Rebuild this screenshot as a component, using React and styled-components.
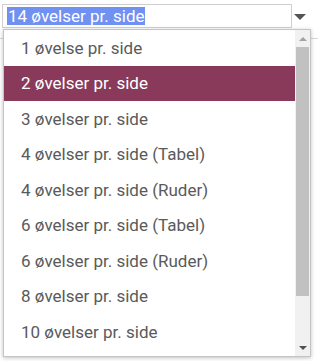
import React from "react";
import styled, { createGlobalStyle } from "styled-components";

const Global = createGlobalStyle`
  html, body { margin: 0; padding: 0; background: #fff; }
  body { font-family: Roboto, "Liberation Sans", Arial, sans-serif; width: 318px; height: 361px; overflow: hidden; }
`;

const Page = styled.div`
  position: relative;
  width: 318px;
  height: 361px;
`;

const SelectRow = styled.div`
  display: flex;
  align-items: center;
  padding: 4px 0 0 2px;
`;

const Field = styled.div`
  box-sizing: border-box;
  width: 290px;
  height: 24px;
  border: 1px solid #cfcfcf;
  display: flex;
  align-items: center;
  padding-left: 4px;
`;

const Selected = styled.span`
  background: #7090f2;
  color: #fff;
  font-size: 17px;
  line-height: 18px;
  padding: 0 0 0 1px;
  white-space: nowrap;
`;

const Caret = styled.div`
  width: 0;
  height: 0;
  margin: 2px 0 0 2px;
  border-left: 6px solid transparent;
  border-right: 6px solid transparent;
  border-top: 6px solid #555;
`;

const Rule = styled.div`
  margin-top: 10px;
  height: 1px;
  background: #d6d6d6;
`;

const Menu = styled.div`
  position: absolute;
  left: 3px;
  top: 29px;
  width: 308px;
  height: 328px;
  box-sizing: border-box;
  border: 1px solid #c4c4c4;
  background: #fff;
  box-shadow: 0 1px 4px rgba(0, 0, 0, 0.25);
  display: flex;
  overflow: hidden;
`;

const List = styled.ul`
  list-style: none;
  margin: 0;
  padding: 0;
  flex: 1;
`;

const Item = styled.li`
  height: 35.5px;
  display: flex;
  align-items: center;
  padding-left: 17px;
  font-size: 17px;
  color: ${(p) => (p.$active ? "#fff" : "#5a5a5a")};
  background: ${(p) => (p.$active ? "#893a5b" : "transparent")};
  white-space: nowrap;
`;

const Scrollbar = styled.div`
  width: 15px;
  background: #f1f1f1;
  display: flex;
  flex-direction: column;
  align-items: stretch;
`;

const ArrowBox = styled.div`
  height: 17px;
  display: flex;
  align-items: center;
  justify-content: center;
`;

const Up = styled.div`
  width: 0; height: 0;
  border-left: 4px solid transparent;
  border-right: 4px solid transparent;
  border-bottom: 4px solid #a3a3a3;
`;

const Down = styled.div`
  width: 0; height: 0;
  border-left: 4px solid transparent;
  border-right: 4px solid transparent;
  border-top: 4px solid #505050;
`;

const Thumb = styled.div`
  height: 249px;
  margin: 0 1px;
  background: #c1c1c1;
`;

const Track = styled.div`
  flex: 1;
`;

const items = [
  "1 øvelse pr. side",
  "2 øvelser pr. side",
  "3 øvelser pr. side",
  "4 øvelser pr. side (Tabel)",
  "4 øvelser pr. side (Ruder)",
  "6 øvelser pr. side (Tabel)",
  "6 øvelser pr. side (Ruder)",
  "8 øvelser pr. side",
  "10 øvelser pr. side",
];

export default function App() {
  return (
    <Page>
      <Global />
      <SelectRow>
        <Field>
          <Selected>14 øvelser pr. side</Selected>
        </Field>
        <Caret />
      </SelectRow>
      <Rule />
      <Menu>
        <List>
          {items.map((t, i) => (
            <Item key={t} $active={i === 1}>{t}</Item>
          ))}
        </List>
        <Scrollbar>
          <ArrowBox><Up /></ArrowBox>
          <Thumb />
          <Track />
          <ArrowBox><Down /></ArrowBox>
        </Scrollbar>
      </Menu>
    </Page>
  );
}
